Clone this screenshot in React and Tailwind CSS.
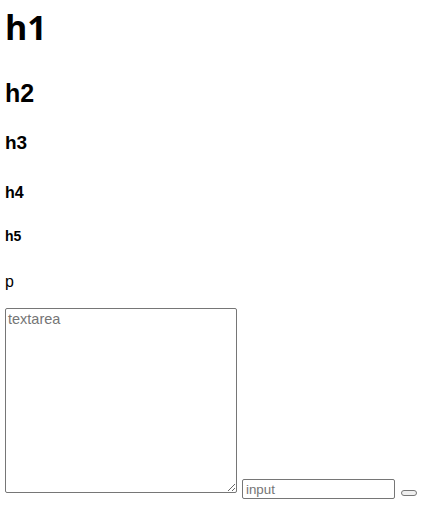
export default function App() {
  return (
    <div className="flex flex-col items-start px-[5px] bg-white text-black font-['Liberation_Sans',Arial,sans-serif]">
      <h1 className="mt-[10px] h-[34px] text-[34px] leading-[34px] font-bold font-['Open_Sans',sans-serif]">h1</h1>
      <h2 className="mt-[37px] h-[25px] text-[25px] leading-[25px] font-bold">h2</h2>
      <h3 className="mt-[27px] h-[19px] text-[19px] leading-[19px] font-bold">h3</h3>
      <h4 className="mt-[33px] h-[16px] text-[16px] leading-[16px] font-bold">h4</h4>
      <h5 className="mt-[28px] h-[14px] text-[14px] leading-[14px] font-bold">h5</h5>
      <p className="mt-[31px] h-[16px] text-[16px] leading-[16px]">p</p>
      <div className="mt-[18px] flex items-end">
        <textarea
          placeholder="textarea"
          className="mb-[6px] w-[232px] h-[185px] border border-[#767676] rounded-[2px] px-[2px] pt-[2px] text-[14.5px] leading-[17px] placeholder:text-[#757575] resize"
        />
        <input
          placeholder="input"
          className="ml-[5px] w-[153px] h-[20px] border border-[#767676] rounded-[2px] px-[3px] text-[13.33px] leading-[18px] placeholder:text-[#757575]"
        />
        <button className="ml-[6px] mb-[3px] w-[16px] h-[6px] border border-[#767676] bg-[#efefef] rounded-[3px]"></button>
      </div>
    </div>
  );
}
